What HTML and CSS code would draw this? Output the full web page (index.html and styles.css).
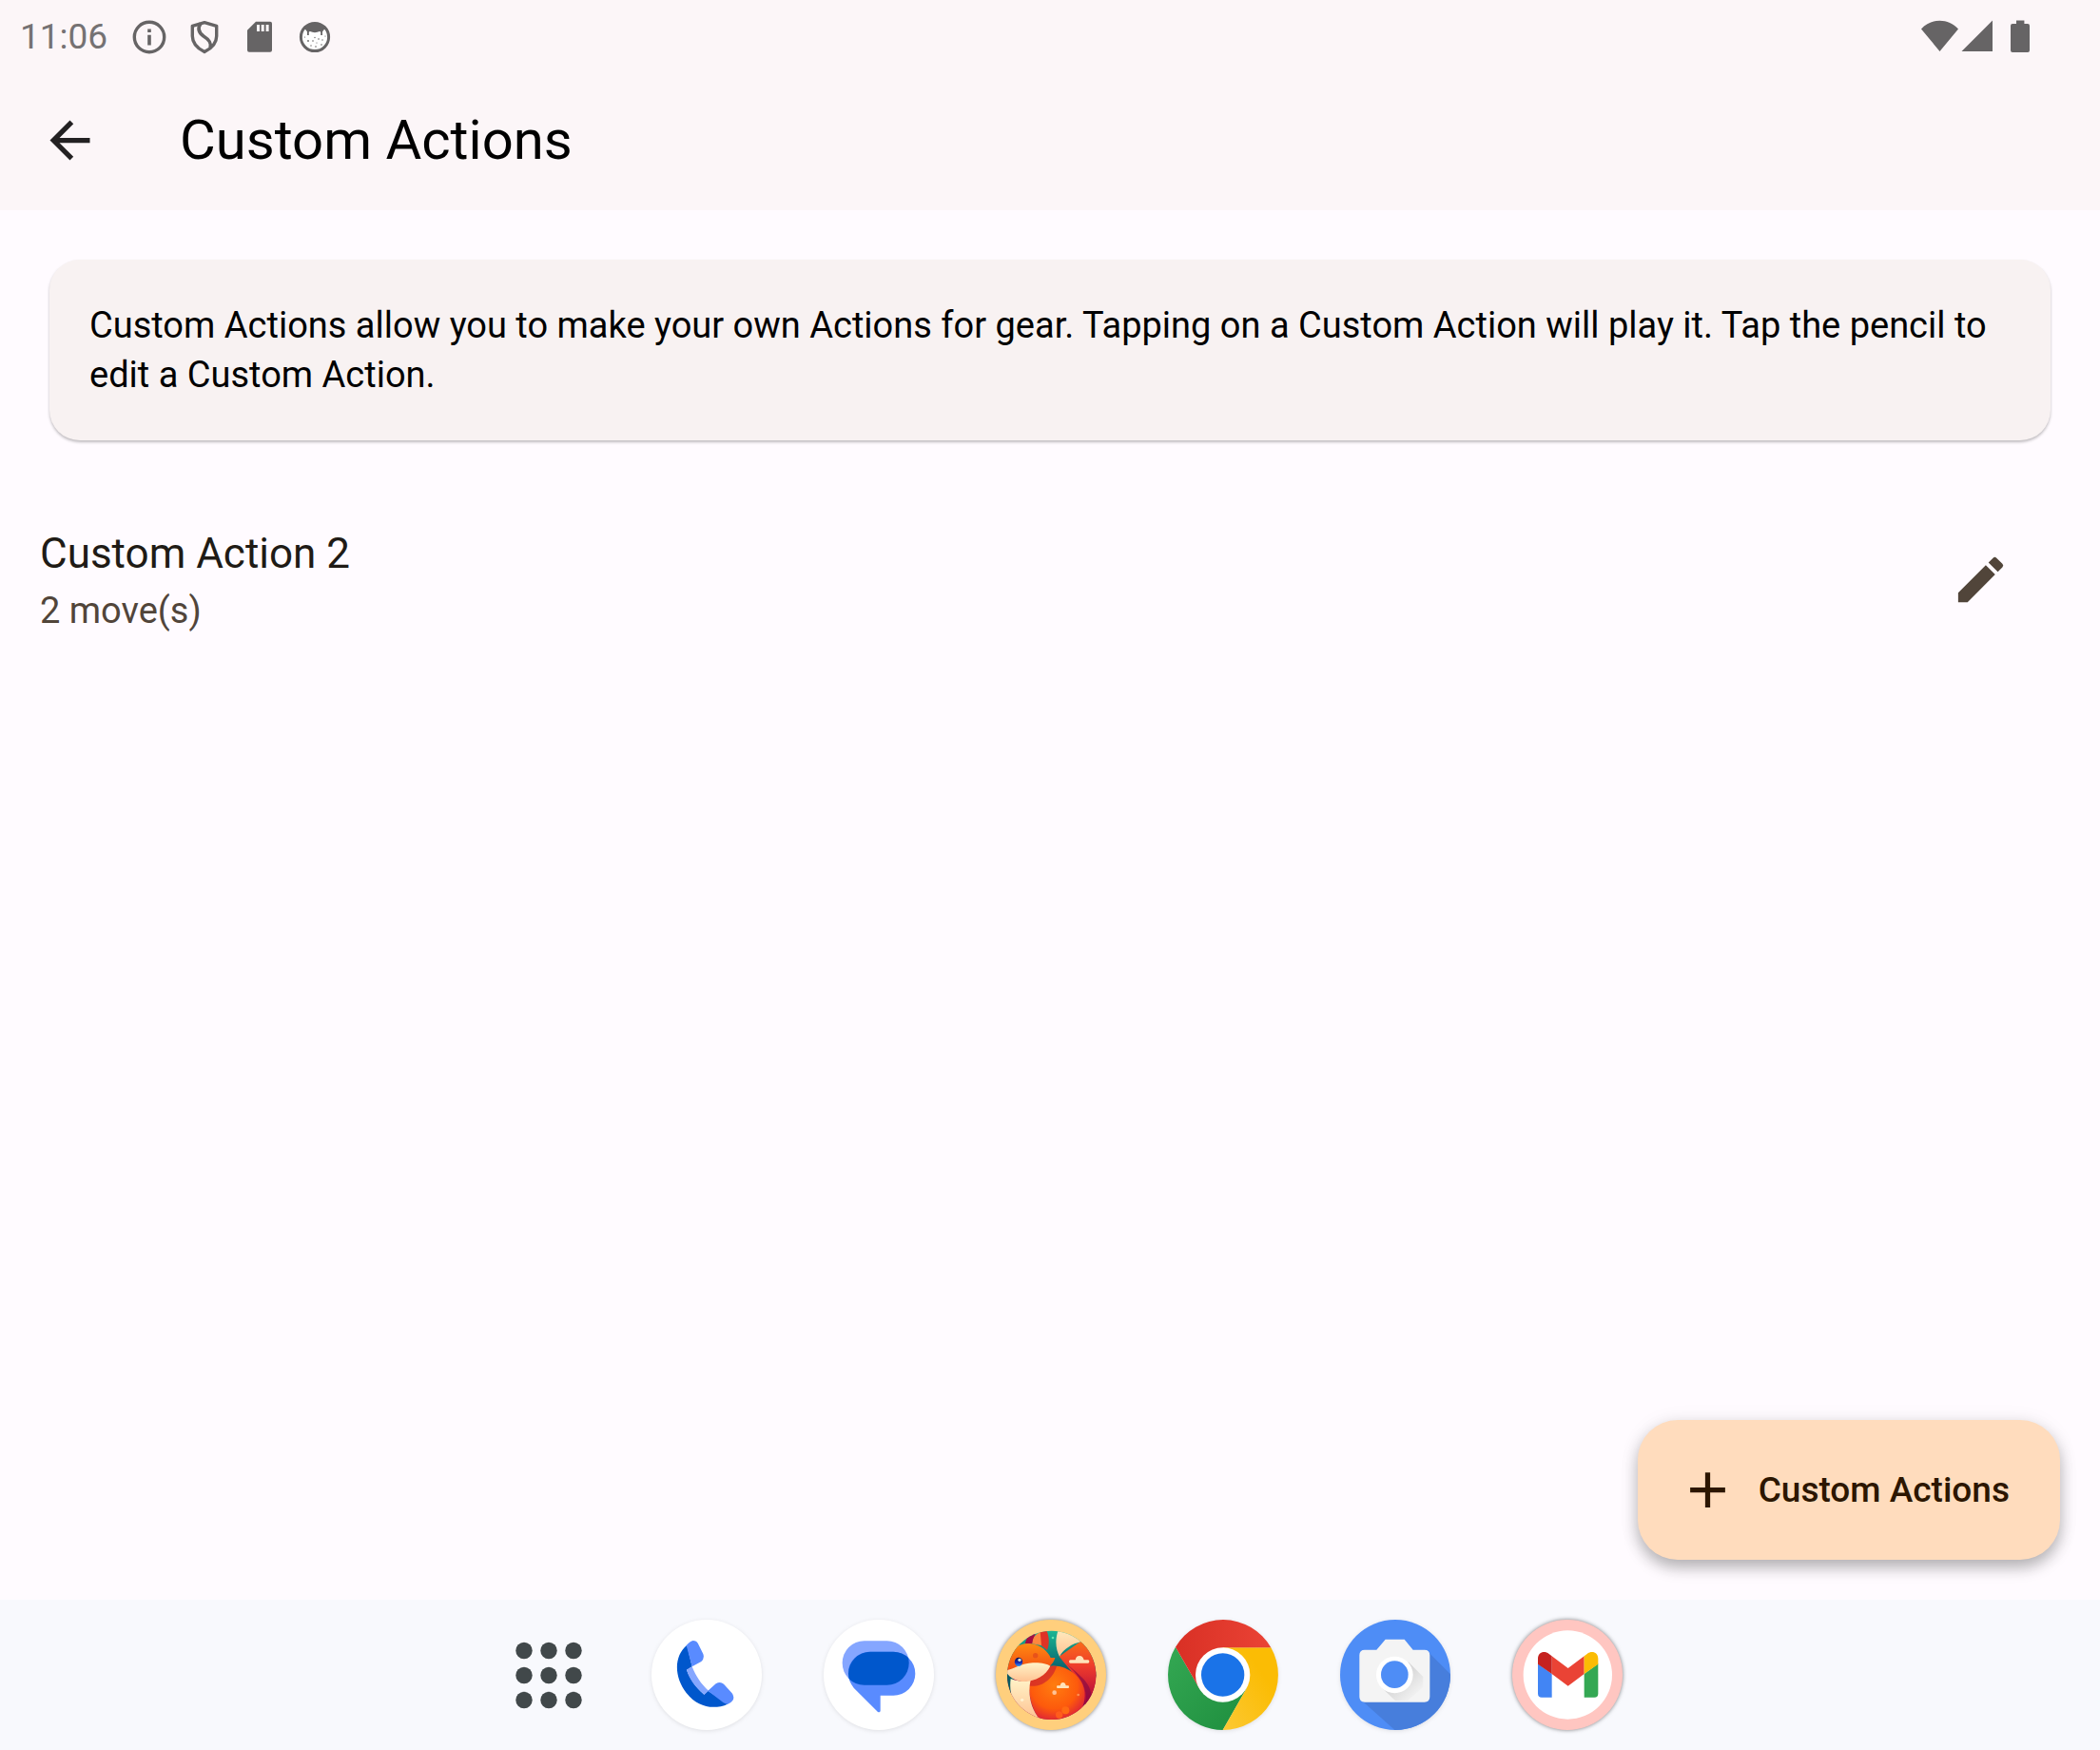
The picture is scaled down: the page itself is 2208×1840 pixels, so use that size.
FILE: index.html
```html
<!DOCTYPE html>
<html lang="en">
<head>
<meta charset="utf-8">
<meta name="viewport" content="width=device-width, initial-scale=1">
<title>Custom Actions</title>
<link rel="stylesheet" href="styles.css">
</head>
<body>
<div class="top">
  <div class="status">
    <span class="clock">11:06</span>
    <svg class="status-icon" viewBox="0 0 42 42" aria-hidden="true"><circle cx="21" cy="21" r="15.7" fill="none" stroke="#666465" stroke-width="3.4"/><path d="M19.2 18.8h3.6v10.8h-3.6zM19.2 12.4h3.6V16h-3.6z" fill="#666465"/></svg>
    <svg class="status-icon" viewBox="0 0 42 42" aria-hidden="true"><path d="M21 5.600 8.300 9.300v10.700c0 7 4.700 12.500 12.700 16.600 8-4.100 12.700-9.600 12.700-16.600V9.300z" fill="none" stroke="#666465" stroke-width="3.400" stroke-linejoin="round"/><path d="M17 6.500C13.500 12 15 16.500 20 20 26 23.800 28.500 27 27 32" fill="none" stroke="#666465" stroke-width="3.600"/></svg>
    <svg class="status-icon" viewBox="0 0 42 42" aria-hidden="true"><path fill-rule="evenodd" d="M17 4.700h15q2 0 2 2v28q0 2-2 2H10q-2 0-2-2V13.700zM18 8v7h3V8zM22.700 8v7h3V8zM27.600 8v7h3V8z" fill="#666465"/></svg>
    <svg class="status-icon" viewBox="0 0 42 42" aria-hidden="true"><circle cx="21" cy="21" r="14.600" fill="#fff" stroke="#666465" stroke-width="3"/><path d="M10 11.500C15 4.500 27 4.500 32 11.500l-3.500 4.500-2.500-1c-3 1.500-7 1.500-10 0l-2.500 1z" fill="#666465"/><g fill="#666465"><path d="M13 15h1.800v4H13zM27.200 15H29v4h-1.800z"/><circle cx="14" cy="25" r=".9"/><circle cx="21" cy="21.500" r=".7"/><circle cx="19" cy="25" r=".8"/><circle cx="25" cy="23" r=".8"/><circle cx="29" cy="24" r=".7"/><circle cx="28" cy="29" r=".8"/><circle cx="17" cy="30" r=".7"/><circle cx="22" cy="31" r=".8"/><circle cx="23" cy="27" r=".6"/><circle cx="10.500" cy="21" r=".6"/><circle cx="32" cy="20" r=".6"/></g></svg>
    <svg class="signals" viewBox="0 0 116 42" aria-hidden="true"><path fill="#666465" d="M0 12.500C10 .8 29 .8 39 12.500L19.500 36zM42.500 36 75 3.500V36zM100 3.500h8.400v3.400h3.600q2 0 2 2V35q0 2-2 2H96q-2 0-2-2V8.900q0-2 2-2h4z"/></svg>
  </div>
  <header class="appbar">
    <button class="icon-button" type="button" aria-label="Back"><svg class="icon" viewBox="0 0 24 24"><path fill="#232122" d="M20 11H7.830l5.590-5.590L12 4l-8 8 8 8 1.410-1.410L7.830 13H20z"/></svg></button>
    <h1 class="title">Custom Actions</h1>
  </header>
</div>
<main class="content">
  <p class="card">Custom Actions allow you to make your own Actions for gear. Tapping on a Custom Action will play it. Tap the pencil to edit a Custom Action.</p>
  <ul class="list">
    <li class="item">
      <button class="play" type="button"><span class="name">Custom Action 2</span><span class="moves">2 move(s)</span></button>
      <button class="icon-button" type="button" aria-label="Edit Custom Action 2"><svg class="icon" viewBox="0 0 24 24"><path fill="#51453a" d="M3 17.250V21h3.750L17.810 9.940l-3.750-3.750zM20.710 7.040a1 1 0 0 0 0-1.410l-2.340-2.340a1 1 0 0 0-1.410 0l-1.830 1.830 3.750 3.750z"/></svg></button>
    </li>
  </ul>
  <button class="fab" type="button"><svg class="icon" viewBox="0 0 24 24" aria-hidden="true"><path fill="#2c1600" d="M19 13h-6v6h-2v-6H5v-2h6V5h2v6h6z"/></svg><span>Custom Actions</span></button>
</main>
<nav class="dock" aria-label="Taskbar">
  <button class="app" type="button" aria-label="All apps"><svg class="app-icon" viewBox="0 0 116 116"><g fill="#41484a"><circle cx="32" cy="32.500" r="8.700"/><circle cx="58" cy="32.500" r="8.700"/><circle cx="84" cy="32.500" r="8.700"/><circle cx="32" cy="58.500" r="8.700"/><circle cx="58" cy="58.500" r="8.700"/><circle cx="84" cy="58.500" r="8.700"/><circle cx="32" cy="84.500" r="8.700"/><circle cx="58" cy="84.500" r="8.700"/><circle cx="84" cy="84.500" r="8.700"/></g></svg></button>
  <button class="app" type="button" aria-label="Phone"><svg class="app-icon shadow" viewBox="494 67 348 348"><circle cx="668" cy="241" r="174" fill="#fff"/><path fill="#0057cc" d="M606 147C565 180 564 247 604 298 640 344 690 352 735 333L672 291 660 303C635 281 615 255 605 225L622 215z"/><path fill="#85a6ff" d="M605 225 622 215C634 245 650 270 674 291L660 303C633 280 614 255 605 225z"/><path fill="#598bff" d="M604 148Q616 135 625 133 636 133 641 143L657 175Q662 189 651 199L622 215zM672 291 697 269Q711 261 722 270L748 299Q757 311 750 322 743 331 735 333 727 333 720 328z"/></svg></button>
  <button class="app" type="button" aria-label="Messages"><svg class="app-icon shadow" viewBox="1036 67 348 348"><defs><clipPath id="bubble"><rect x="1095" y="134" width="210" height="139" rx="69"/></clipPath></defs><circle cx="1210" cy="241" r="174" fill="#fff"/><rect x="1095" y="134" width="210" height="139" rx="69" fill="#85a6ff"/><path fill="#598bff" d="M1184 168h72a69 69 0 0 1 0 138h-41v48q-1 7-8 4l-76-76c-40-50-7-114 53-114z"/><rect x="1114" y="168" width="211" height="138" rx="69" fill="#0057cc" clip-path="url(#bubble)"/></svg></button>
  <button class="app" type="button" aria-label="Fox"><svg class="app-icon shadow-dark" viewBox="48 36 348 348"><defs>
    <clipPath id="fox-disc"><circle cx="224" cy="211" r="140"/></clipPath>
    <linearGradient id="fox-tail" x1="0" y1="0" x2="0" y2="1"><stop offset="0" stop-color="#ff7a14"/><stop offset=".45" stop-color="#ee3b2c"/><stop offset="1" stop-color="#a8003f"/></linearGradient>
    <radialGradient id="fox-body" cx=".45" cy=".35" r=".7"><stop offset="0" stop-color="#ff7d10"/><stop offset=".6" stop-color="#fd5a0c"/><stop offset="1" stop-color="#d81840"/></radialGradient>
    <linearGradient id="fox-head" x1="0" y1="0" x2="0" y2="1"><stop offset="0" stop-color="#ff8a12"/><stop offset="1" stop-color="#f24a12"/></linearGradient>
    <linearGradient id="fox-cream" x1="0" y1="0" x2="0" y2="1"><stop offset="0" stop-color="#fff3c8"/><stop offset="1" stop-color="#ffc393"/></linearGradient>
    <linearGradient id="fox-eye" x1="0" y1="0" x2="0" y2="1"><stop offset="0" stop-color="#10104c"/><stop offset=".6" stop-color="#1b2cb0"/><stop offset="1" stop-color="#2aa0ff"/></linearGradient>
    <linearGradient id="fox-sky" x1="0" y1="0" x2="0" y2="1"><stop offset="0" stop-color="#1cb894"/><stop offset="1" stop-color="#045066"/></linearGradient></defs>
    <circle cx="222" cy="210" r="174" fill="#ffcf7d"/>
    <g clip-path="url(#fox-disc)"><rect x="80" y="68" width="290" height="150" fill="url(#fox-sky)"/><rect x="80" y="200" width="290" height="155" fill="#8c0a45"/><path d="M84 200h20v70H84z" fill="#075b62"/>
    <path d="M248 152 314 106 340 80 390 150 380 270 330 310C330 240 290 205 248 152z" fill="url(#fox-tail)"/>
    <path d="M248 152C290 195 345 235 330 305L350 275C345 225 300 205 248 152z" fill="#7d0844" opacity=".6"/>
    <path d="M248 60C232 100 238 130 249 152 262 128 290 112 315 106L340 80 300 50z" fill="url(#fox-cream)"/>
    <path d="M140 112Q145 85 175 73L163 112z" fill="#a50c42"/><path d="M163 112Q163 85 190 74L195 118z" fill="#ff873e"/><path d="M188 73 207 68C218 90 217 115 210 132L192 118z" fill="#df3325"/>
    <path d="M155 225C185 175 250 165 300 210 338 245 335 300 310 330 270 360 215 365 185 350 155 305 150 260 155 225z" fill="url(#fox-body)"/>
    <path d="M155 245C195 250 230 220 240 182L215 182 150 225z" fill="#c91e2f" opacity=".65"/>
    <path d="M95 222C120 232 140 232 158 226 148 270 158 315 187 350 130 345 85 300 95 222z" fill="url(#fox-cream)"/>
    <path d="M80 200C80 140 110 110 153 111 190 112 215 140 221 156L235 156Q230 175 215 184C170 170 130 180 84 200z" fill="url(#fox-head)"/>
    <path d="M78 196C105 193 125 174 165 172 190 171 210 175 220 182 205 215 165 235 125 230 102 226 86 213 78 196z" fill="url(#fox-cream)"/><circle cx="173" cy="149" r="8" fill="#e8521a"/>
    <ellipse cx="120" cy="169" rx="12.500" ry="14" fill="url(#fox-eye)"/><circle cx="123" cy="163" r="5" fill="#dfe5cf"/>
    <path d="M283 163h16q2-13 13-13t14 13h13q4 0 4 5t-4 5h-56q-4 0-4-5t4-5zM243 244h8q2-10 9-10t9 10h7q3 0 3 4t-3 4h-33q-3 0-3-4t3-4z" fill="#ffe3ba"/>
    <circle cx="233" cy="266" r="7" fill="#ffc296"/><circle cx="131" cy="289" r="5" fill="#fff2d2"/><circle cx="228" cy="93" r="4" fill="#5ee3b1"/><circle cx="308" cy="273" r="4" fill="#ff8f50"/><circle cx="268" cy="322" r="12" fill="#ff6a12"/><circle cx="248" cy="336" r="11" fill="#ff5c1b"/></g></svg></button>
  <button class="app" type="button" aria-label="Chrome"><svg class="app-icon shadow" viewBox="23 37 348 348"><defs><linearGradient id="red"><stop offset="0" stop-color="#d93025"/><stop offset="1" stop-color="#ea4335"/></linearGradient><linearGradient id="green" x1="0" y1="0" x2="1" y2="1"><stop offset="0" stop-color="#34a853"/><stop offset="1" stop-color="#1e8e3e"/></linearGradient><linearGradient id="yellow" x1="1" y1="0" x2="0" y2="1"><stop offset=".3" stop-color="#fbbc04"/><stop offset="1" stop-color="#fcc934"/></linearGradient></defs><path fill="url(#green)" d="M47 123A174 174 0 0 0 196 385L271 254 197 211 122 254z"/><path fill="url(#yellow)" d="M196 385A174 174 0 0 0 348 125H197V211L271 254z"/><path fill="url(#red)" d="M47 123A174 174 0 0 1 348 125H197V211L122 254z"/><circle cx="196" cy="211" r="86" fill="#fff"/><circle cx="196" cy="211" r="68" fill="#1a73e8"/></svg></button>
  <button class="app" type="button" aria-label="Camera"><svg class="app-icon shadow" viewBox="566 37 348 348"><defs><clipPath id="camera-disc"><circle cx="740" cy="211" r="174"/></clipPath><linearGradient id="lens-shade" x1="0" y1="0" x2="1" y2="1"><stop offset=".4" stop-color="#bbb"/><stop offset=".85" stop-color="#f1f1f1"/></linearGradient></defs><circle cx="740" cy="211" r="174" fill="#4e8df6"/><path clip-path="url(#camera-disc)" fill="#477edc" d="M848 143 920 215V390H744L632 290z"/><path fill="#f4f4f4" d="M644 132h37l28-33h60l27 33h36q17 0 17 17v131q0 17-17 17H644q-17 0-17-17V149q0-17 17-17z"/><path fill="url(#lens-shade)" opacity=".55" d="M781 170 828 217V250L780 292H740L698 252z"/><circle cx="738" cy="211" r="58" fill="#fff"/><circle cx="738" cy="210" r="43" fill="#4e8df6"/></svg></button>
  <button class="app" type="button" aria-label="Gmail"><svg class="app-icon shadow-dark" viewBox="1107 37 348 348"><circle cx="1281" cy="211" r="174" fill="#ffc6c1"/><circle cx="1282" cy="211" r="140" fill="#fff"/><path fill="#4285f4" d="M1188 176 1232 208V282H1200Q1188 282 1188 270z"/><path fill="#34a853" d="M1378 176 1334 208V282H1366Q1378 282 1378 270z"/><path fill="#ea4335" d="M1232 152 1283 190 1334 152V208L1283 246 1232 208z"/><path fill="#c5221f" d="M1188 177V160C1188 140 1208 133 1223 145L1232 152V208z"/><path fill="#fbbc04" d="M1378 177V160C1378 140 1358 133 1343 145L1334 152V208z"/></svg></button>
</nav>
</body>
</html>
```
FILE: styles.css
```css
* {
  box-sizing: border-box;
}

body {
  margin: 0;
  min-height: 100vh;
  display: flex;
  flex-direction: column;
  background: #fffbff;
  color: #000;
  font-family: Roboto, sans-serif;
  font-size: 38px;
  line-height: 52px;
}

button {
  border: 0;
  padding: 0;
  background: none;
  color: inherit;
  font: inherit;
}

svg {
  display: block;
}

.top {
  background: #fcf6f8;
}

.status {
  display: flex;
  align-items: center;
  gap: 16px;
  height: 74px;
  padding: 3px 72px 0 21px;
}

.clock {
  margin-right: 7px;
  color: #757273;
  font-size: 37px;
}

.status-icon {
  width: 42px;
  height: 42px;
}

.signals {
  width: 116px;
  height: 42px;
  margin-left: auto;
}

.appbar {
  display: flex;
  align-items: center;
  gap: 53px;
  height: 147px;
  padding-left: 10px;
}

.icon-button {
  display: grid;
  place-items: center;
  width: 126px;
  height: 126px;
}

.icon {
  width: 63px;
  height: 63px;
}

.title {
  margin: 0;
  padding-bottom: 2px;
  font-size: 58px;
  font-weight: 400;
  line-height: 74px;
}

.content {
  flex: 1;
  display: flex;
  flex-direction: column;
  padding-bottom: 42px;
}

.card {
  margin: 52px;
  padding: 43px 42px;
  border-radius: 32px;
  background: #f8f2f2;
  box-shadow: 0 2px 3px rgba(0, 0, 0, 0.25);
}

.list {
  margin: 0;
  padding: 0;
  list-style: none;
}

.item {
  display: flex;
  align-items: center;
  justify-content: space-between;
  min-height: 189px;
  padding: 0 63px 0 42px;
}

.play {
  flex: 1;
  display: flex;
  flex-direction: column;
  gap: 2px;
  text-align: left;
}

.name {
  color: #1f1b16;
  font-size: 44px;
  line-height: 63px;
}

.moves {
  color: #51453a;
}

.fab {
  display: flex;
  align-items: center;
  align-self: flex-end;
  gap: 22px;
  height: 147px;
  margin: auto 42px 0 0;
  padding: 0 53px 0 42px;
  border-radius: 42px;
  background: #ffdcbd;
  box-shadow: 0 8px 16px rgba(0, 0, 0, 0.28), 0 2px 24px rgba(0, 0, 0, 0.06);
  color: #2c1600;
  font-size: 37px;
  font-weight: 500;
}

.dock {
  display: flex;
  align-items: center;
  justify-content: center;
  gap: 65px;
  height: 158px;
  padding-left: 16px;
  background: #f8f9fd;
}

.app:first-child {
  margin-right: -15px;
}

.app-icon {
  width: 116px;
  height: 116px;
  overflow: visible;
}

.shadow {
  filter: drop-shadow(0 1px 2px rgba(0, 0, 0, 0.1));
}

.shadow-dark {
  filter: drop-shadow(0 0 2px rgba(0, 0, 0, 0.5));
}
```
